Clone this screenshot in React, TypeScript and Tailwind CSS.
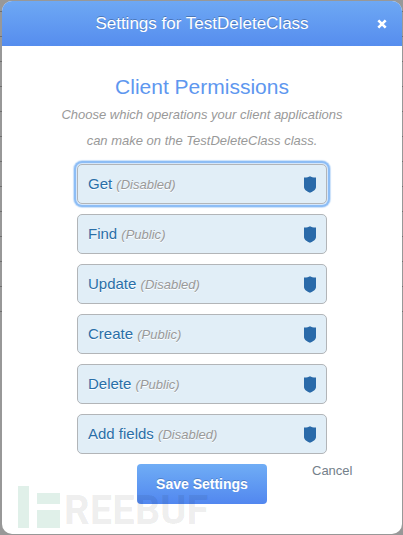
const permissions = [
  { name: 'Get', access: 'Disabled' },
  { name: 'Find', access: 'Public' },
  { name: 'Update', access: 'Disabled' },
  { name: 'Create', access: 'Public' },
  { name: 'Delete', access: 'Public' },
  { name: 'Add fields', access: 'Disabled' },
];

const ShieldIcon = () => (
  <svg viewBox="0 0 12 17" className="h-[17px] w-3 shrink-0 fill-[#2a6aa9]" aria-hidden="true">
    <path d="M6 0.2 C7.2 1.1 9 1.6 12 1.6 V11 C12 13.6 9 15.6 6 16.8 C3 15.6 0 13.6 0 11 V1.6 C3 1.6 4.8 1.1 6 0.2 Z" />
  </svg>
);

const CloseIcon = () => (
  <svg viewBox="0 0 10 10" className="size-[10px]" aria-hidden="true">
    <path d="M1.3 1.3 L8.7 8.7 M8.7 1.3 L1.3 8.7" stroke="white" strokeWidth="2.6" />
  </svg>
);

const PermissionButton = ({ name, access }: { name: string; access: string }) => (
  <button
    type="button"
    autoFocus={name === 'Get'}
    className="flex h-10 w-full items-center justify-between rounded-[5px] border border-[#b2b5b8] bg-[#e1eef7] px-[10px] text-left outline-none focus:shadow-[0_0_0_1px_#d5e7fb,0_0_0_3px_#8dbdf5,0_0_1px_4px_#c9e0fa]"
  >
    <span className="text-[15px] leading-6 text-[#2a6fa8] [text-shadow:0_1px_0_white]">
      {name} <em className="text-[13px] text-[#999]">({access})</em>
    </span>
    <ShieldIcon />
  </button>
);

const Watermark = () => (
  <div className="pointer-events-none absolute bottom-[6px] left-4 flex items-center gap-1" aria-hidden="true">
    <svg viewBox="0 0 42 42" className="size-[42px] fill-[#2f9c6c]/15">
      <rect width="11" height="42" />
      <rect x="19" y="7" width="23" height="11" />
      <rect x="19" y="24" width="23" height="18" />
    </svg>
    <span className="pt-2 font-['Roboto',sans-serif] text-[40px] leading-8 font-bold text-black/8">
      REEBUF
    </span>
  </div>
);

export default function App() {
  return (
    <div className="min-h-screen bg-[#989898] bg-[repeating-linear-gradient(to_bottom,transparent_0_11px,#6f6f6f_11px_12px,transparent_12px_25px)] bg-size-[100%_312px] bg-no-repeat pt-px pr-px pb-px pl-[2px] font-['Liberation_Sans',Arial,sans-serif]">
      <main
        role="dialog"
        aria-labelledby="settings-title"
        className="relative flex min-h-[calc(100vh-2px)] flex-col overflow-hidden rounded-[10px] bg-white"
      >
        <header className="grid h-[45px] grid-cols-[40px_1fr_40px] items-center bg-linear-to-b from-[#6ea8f4] to-[#568dee]">
          <h1
            id="settings-title"
            className="col-start-2 text-center text-[17px] leading-6 text-white [text-shadow:0_-1px_0_rgba(0,0,0,0.25)]"
          >
            Settings for TestDeleteClass
          </h1>
          <button type="button" aria-label="Close" className="flex justify-center">
            <CloseIcon />
          </button>
        </header>

        <section className="mx-auto w-[300px] pt-7 text-center">
          <h2 className="pb-[2px] text-[21px] leading-[26px] text-[#5e97ef]">Client Permissions</h2>
          <p className="text-[13px] leading-[26px] text-[#999] italic">
            Choose which operations your client applications can make on the TestDeleteClass class.
          </p>
        </section>

        <ul className="mx-auto mt-[10px] flex w-[250px] flex-col gap-[10px]">
          {permissions.map((permission) => (
            <li key={permission.name}>
              <PermissionButton {...permission} />
            </li>
          ))}
        </ul>

        <footer className="grid grid-cols-[1fr_130px_1fr] items-start pt-[10px]">
          <button
            type="submit"
            className="col-start-2 h-10 rounded-[4px] bg-linear-to-b from-[#70adf5] to-[#5287ef] text-[14px] font-bold text-white [text-shadow:0_-1px_0_rgba(0,0,0,0.2)]"
          >
            Save Settings
          </button>
          <a href="#" className="ml-[45px] text-[13px] leading-[14px] text-[#74808a]">
            Cancel
          </a>
        </footer>

        <Watermark />
      </main>
    </div>
  );
}
